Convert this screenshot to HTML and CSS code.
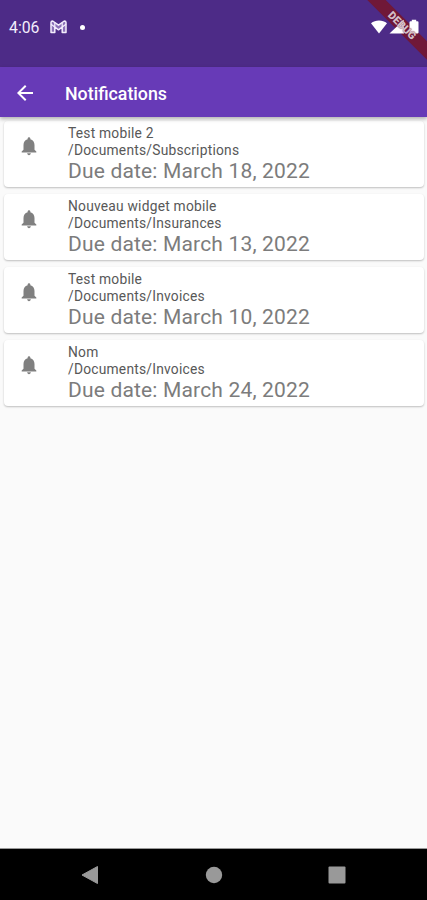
FILE: index.html
```
<!DOCTYPE html>
<html lang="en">
<head>
  <meta charset="UTF-8" />
  <meta name="viewport" content="width=device-width, initial-scale=1.0" />
  <title>Notifications</title>
  <link rel="stylesheet" href="styles.css">
</head>
<body>
  <svg width="0" height="0" class="sprite">
    <symbol id="bell" viewBox="0 0 24 24">
      <path d="M12 22c1.1 0 2-.9 2-2h-4c0 1.1.9 2 2 2zm6-6v-5c0-3.07-1.63-5.64-4.5-6.32V4c0-.83-.67-1.5-1.5-1.5s-1.5.67-1.5 1.5v.68C7.64 5.36 6 7.92 6 11v5l-2 2v1h16v-1l-2-2z"/>
    </symbol>
  </svg>

  <div class="screen">
    <div class="status-bar">
      <span class="time">4:06</span>
      <svg class="mail" width="17" height="14" viewBox="0 0 17 14">
        <path d="M1 2.500Q1 1 2.700 1L8.500 5.200L14.300 1Q16 1 16 2.500V12.500H12.200V7L8.500 9.800L4.800 7V12.500H1z" fill="#8b70b8" stroke="#f3edfc" stroke-width="1.500" stroke-linejoin="round"/>
        <path d="M1 4.200L4.800 7V2.600M16 4.200L12.200 7V2.600" fill="none" stroke="#f3edfc" stroke-width="1.200"/>
      </svg>
      <span class="dot"></span>
      <svg class="signals" width="50" height="16" viewBox="0 0 50 16">
        <path d="M0 4.300C4.400 .5 11.600 .5 16 4.300L8 14.400z"/>
        <path d="M18.500 14.400L33 .8V14.400z"/>
        <path d="M38.500 13.400V3.200q0-1 1-1h1.300V.8h4.400v1.400h1.300q1 0 1 1v10.200q0 1-1 1h-7q-1 0-1-1z"/>
      </svg>
    </div>

    <div class="app-bar">
      <svg class="back" width="24" height="24" viewBox="0 0 24 24">
        <path d="M20 11H7.830l5.590-5.590L12 4l-8 8 8 8 1.410-1.410L7.830 13H20v-2z"/>
      </svg>
      <h1>Notifications</h1>
    </div>

    <div class="list">
      <div class="card">
        <svg class="bell"><use href="#bell"/></svg>
        <div class="info">
          <p>Test mobile 2</p>
          <p>/Documents/Subscriptions</p>
          <p class="due">Due date: March 18, 2022</p>
        </div>
      </div>
      <div class="card">
        <svg class="bell"><use href="#bell"/></svg>
        <div class="info">
          <p>Nouveau widget mobile</p>
          <p>/Documents/Insurances</p>
          <p class="due">Due date: March 13, 2022</p>
        </div>
      </div>
      <div class="card">
        <svg class="bell"><use href="#bell"/></svg>
        <div class="info">
          <p>Test mobile</p>
          <p>/Documents/Invoices</p>
          <p class="due">Due date: March 10, 2022</p>
        </div>
      </div>
      <div class="card">
        <svg class="bell"><use href="#bell"/></svg>
        <div class="info">
          <p>Nom</p>
          <p>/Documents/Invoices</p>
          <p class="due">Due date: March 24, 2022</p>
        </div>
      </div>
    </div>

    <div class="nav-bar">
      <svg width="18" height="20" viewBox="0 0 18 20"><path d="M1 10L16.500 1.500V18.500z" stroke-width="1" stroke-linejoin="round"/></svg>
      <svg width="18" height="20" viewBox="0 0 18 20"><circle cx="9" cy="10" r="8.200"/></svg>
      <svg width="18" height="20" viewBox="0 0 18 20"><rect x=".5" y="1.500" width="17" height="17" rx="1"/></svg>
    </div>

    <div class="debug-banner"></div>
    <div class="debug-banner debug-label">DEBUG</div>
  </div>
</body>
</html>
```

FILE: styles.css
```
:root {
  --primary: #673ab7;
  --primary-dark: #4d2b87;
  --bg: #fafafa;
}

* {
  box-sizing: border-box;
}

body {
  margin: 0;
  font-family: Roboto, sans-serif;
  background-color: var(--bg);
}

.sprite {
  position: absolute;
}

.screen {
  position: relative;
  display: flex;
  flex-direction: column;
  height: 900px;
  overflow: hidden;
}

.status-bar {
  display: flex;
  align-items: center;
  height: 67px;
  padding: 0 7px 13px 9px;
  background-color: var(--primary-dark);
  color: #f3edfc;
}

.time {
  width: 41px;
  padding-top: 1px;
  font-size: 15.8px;
}

.dot {
  width: 5px;
  height: 5px;
  margin-left: 13px;
  border-radius: 50%;
  background-color: #fff;
}

/* icons sit above the ribbon, its label sits above the icons */
.signals {
  position: relative;
  z-index: 3;
  margin-left: auto;
  margin-right: -1px;
  fill: #fff;
}

.app-bar {
  display: flex;
  align-items: center;
  height: 50px;
  padding-left: 13px;
  background-color: var(--primary);
  color: #fff;
  box-shadow: 0 2px 4px rgba(0,0,0,0.3);
  z-index: 1;
}

.back {
  margin-top: 1px;
  fill: #fff;
}

h1 {
  margin: 2px 0 0 28px;
  font-size: 17.8px;
  font-weight: 500;
}

.list {
  flex: 1;
  display: flex;
  flex-direction: column;
  gap: 7px;
  padding: 4px 3px 0 4px;
}

.card {
  display: flex;
  height: 66px;
  padding: 4px 0 0 14px;
  background-color: #fff;
  border-radius: 4px;
  box-shadow: 0 1px 2px rgba(0,0,0,0.24);
}

.bell {
  width: 22px;
  height: 22px;
  margin-top: 10px;
  fill: #808080;
}

.info {
  margin-left: 28px;
}

.info p {
  margin: 0;
  font-size: 13.8px;
  line-height: 17px;
  letter-spacing: 0.22px;
  color: #585858;
  white-space: nowrap;
}

.info .due {
  font-size: 21px;
  line-height: 24px;
  letter-spacing: 0.17px;
  color: #7c7c7c;
}

.nav-bar {
  display: flex;
  justify-content: space-between;
  align-items: center;
  height: 52px;
  padding: 0 81px;
  border-top: 1px solid #999;
  background-color: #000;
  fill: #999;
  stroke: #999;
  stroke-width: 0;
}

/* diagonal ribbon over the top right corner */
.debug-banner {
  position: absolute;
  top: 19px;
  right: -25px;
  width: 100px;
  height: 13px;
  transform: rotate(45deg);
  background-color: #701838;
  z-index: 2;
}

.debug-label {
  background-color: transparent;
  color: #d3bfc8;
  font-size: 10.8px;
  font-weight: 900;
  line-height: 13px;
  text-align: center;
  text-shadow: 0 0 1px #701838;
  z-index: 4;
}
```
